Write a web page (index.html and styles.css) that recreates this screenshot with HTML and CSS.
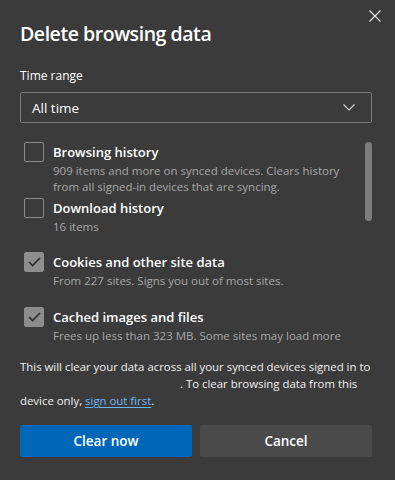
FILE: index.html
```html
<!DOCTYPE html>
<html>
<head>
<meta charset="utf-8">
<link rel="stylesheet" href="styles.css">
</head>
<body>
<div class="dialog">
  <button class="close" aria-label="Close">
    <svg width="12" height="12" viewBox="0 0 12 12"><path d="M0.5 0.5L11.5 11.5M11.5 0.5L0.5 11.5" stroke="#e6e6e6" stroke-width="1.2" fill="none"/></svg>
  </button>
  <h1 class="title">Delete browsing data</h1>
  <div class="label">Time range</div>
  <div class="select">
    <span>All time</span>
    <svg width="12" height="7" viewBox="0 0 12 7"><path d="M0.5 0.5L6 6L11.5 0.5" stroke="#cfcfcf" stroke-width="1.2" fill="none"/></svg>
  </div>
  <div class="list">
    <div class="items">
      <div class="item">
        <span class="box"></span>
        <div class="text">
          <div class="name">Browsing history</div>
          <div class="desc">909 items and more on synced devices. Clears history from all signed-in devices that are syncing.</div>
        </div>
      </div>
      <div class="item">
        <span class="box"></span>
        <div class="text">
          <div class="name">Download history</div>
          <div class="desc">16 items</div>
        </div>
      </div>
      <div class="item gap">
        <span class="box checked"><svg width="13" height="10" viewBox="0 0 13 10"><path d="M1 5L4.5 8.5L12 1" stroke="#2b2b2b" stroke-width="1.6" fill="none"/></svg></span>
        <div class="text">
          <div class="name">Cookies and other site data</div>
          <div class="desc">From 227 sites. Signs you out of most sites.</div>
        </div>
      </div>
      <div class="item gap last">
        <span class="box checked"><svg width="13" height="10" viewBox="0 0 13 10"><path d="M1 5L4.5 8.5L12 1" stroke="#2b2b2b" stroke-width="1.6" fill="none"/></svg></span>
        <div class="text">
          <div class="name">Cached images and files</div>
          <div class="desc nowrap">Frees up less than 323 MB. Some sites may load more</div>
        </div>
      </div>
    </div>
    <div class="scrollbar"></div>
  </div>
  <p class="note">This will clear your data across all your synced devices signed in to <span class="blank"></span>. To clear browsing data from this device only, <a href="#">sign out first</a>.</p>
  <div class="buttons">
    <button class="btn primary">Clear now</button>
    <button class="btn secondary">Cancel</button>
  </div>
</div>
</body>
</html>
```
FILE: styles.css
```css
* { box-sizing: border-box; }
html, body {
  margin: 0;
  height: 100%;
  background: #3b3b3b;
}
body {
  font-family: "Open Sans", "Segoe UI", sans-serif;
  color: #ffffff;
  overflow: hidden;
}
.dialog {
  position: relative;
  padding: 20px 23px 0 20px;
}
.close {
  position: absolute;
  top: 10px;
  right: 14px;
  width: 12px;
  height: 12px;
  padding: 0;
  border: 0;
  background: none;
  display: flex;
}
.title {
  margin: 0;
  font-size: 19.5px;
  font-weight: 600;
  line-height: 28px;
  letter-spacing: -0.45px;
}
.label {
  margin-top: 20px;
  font-size: 12px;
  line-height: 16px;
}
.select {
  margin-top: 8px;
  height: 31px;
  border: 1px solid #7a7a7a;
  border-radius: 2px;
  display: flex;
  align-items: center;
  justify-content: space-between;
  padding: 0 16px 0 11px;
  font-size: 13.5px;
}
.list {
  margin-top: 19px;
  display: flex;
  justify-content: space-between;
  align-items: flex-start;
  height: 210px;
}
.items {
  display: flex;
  flex-direction: column;
}
.item {
  display: flex;
  padding-left: 4px;
}
.item + .item { margin-top: 3px; }
.item.gap { margin-top: 17px; }
.item.last { margin-top: 18px; }
.box {
  flex: none;
  width: 20px;
  height: 20px;
  border: 1px solid #8a8a8a;
  border-radius: 2px;
  margin-right: 9px;
  display: flex;
  align-items: center;
  justify-content: center;
}
.box.checked {
  background: #8d8d8d;
  border-color: #8d8d8d;
}
.text { width: 290px; }
.name {
  font-size: 13px;
  font-weight: 600;
  line-height: 18px;
  margin-top: 1px;
}
.desc {
  font-size: 11.5px;
  color: #a8a8a8;
  line-height: 16px;
  margin-top: 2px;
}
.nowrap { white-space: nowrap; }
.scrollbar {
  width: 7px;
  height: 79px;
  background: #7d7d7d;
  border-radius: 4px;
  margin-top: 0;
}
.note {
  margin: 6px 0 0;
  font-size: 11.4px;
  line-height: 17px;
  color: #f0f0f0;
  width: 355px;
}
.blank {
  display: inline-block;
  width: 160px;
}
.note a {
  color: #6cb8f6;
  text-decoration: underline;
  text-underline-offset: 2px;
}
.buttons {
  margin-top: 16px;
  display: grid;
  grid-template-columns: 1fr 1fr;
  gap: 8px;
  width: 352px;
}
.btn {
  height: 32px;
  border: 0;
  border-radius: 2px;
  font-family: inherit;
  font-size: 13.5px;
  font-weight: 600;
  color: #ffffff;
}
.primary { background: #0067b8; }
.secondary { background: #4a4a4a; }
```
